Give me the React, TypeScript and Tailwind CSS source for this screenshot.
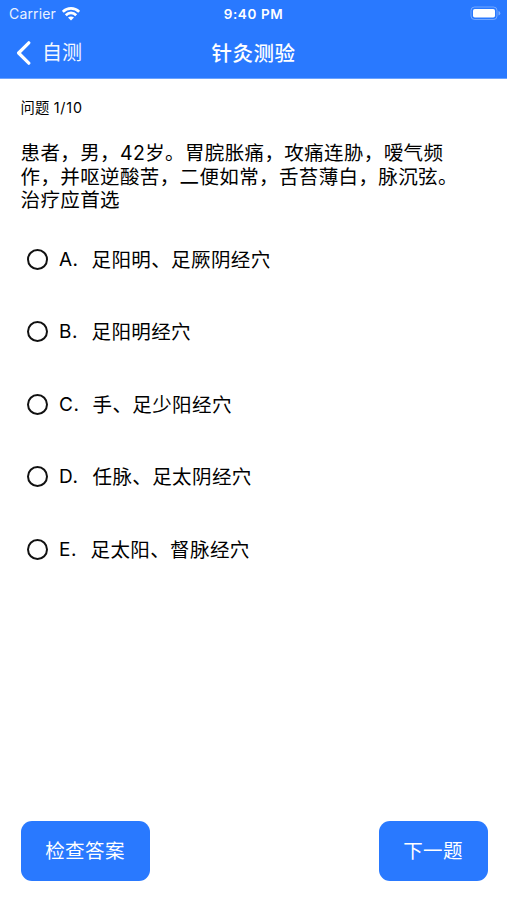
const options = [
  { key: 'A.', text: '足阳明、足厥阴经穴', gap: 'pl-[32.5px]' },
  { key: 'B.', text: '足阳明经穴', gap: 'pl-[32.5px]' },
  { key: 'C.', text: '手、足少阳经穴', gap: 'pl-[33.5px]' },
  { key: 'D.', text: '任脉、足太阴经穴', gap: 'pl-[33.5px]' },
  { key: 'E.', text: '足太阳、督脉经穴', gap: 'pl-[31.5px]' },
];

const questionLines = [
  '患者，男，42岁。胃脘胀痛，攻痛连胁，嗳气频',
  '作，并呕逆酸苦，二便如常，舌苔薄白，脉沉弦。',
  '治疗应首选',
];

function WifiIcon() {
  return (
    <svg className="ml-[6px] h-[14px] w-[18px]" viewBox="0 0 18 14" fill="none" stroke="white" strokeWidth="2.7">
      <path d="M0.8 4.8C5.4 0.2 12.6 0.2 17.2 4.8" />
      <path d="M3.8 8.2C6.8 5.2 11.2 5.2 14.2 8.2" />
      <path d="M9 13.6L6 10.6Q9 8.3 12 10.6Z" fill="white" stroke="none" />
    </svg>
  );
}

function BatteryIcon() {
  return (
    <svg className="h-[15px] w-[31px]" viewBox="0 0 31 15">
      <rect x="1" y="1" width="26" height="12.5" rx="3.5" fill="none" stroke="white" strokeOpacity="0.35" />
      <rect x="3" y="3" width="22" height="8.5" rx="1.8" fill="white" />
      <path d="M28.5 5Q30.3 5.5 30.3 7.2T28.5 9.5Z" fill="white" fillOpacity="0.4" />
    </svg>
  );
}

export default function App() {
  return (
    <div className="flex h-[900px] w-[507px] flex-col overflow-hidden bg-white font-['Inter','Noto_Sans_CJK_SC',sans-serif] text-black">
      <header className="h-[79px] shrink-0 border-b border-[#6ba3ff] bg-[#2979ff] text-white">
        <div className="grid h-[27px] grid-cols-3 items-center">
          <div className="flex h-[27px] items-center pl-[9px]">
            <span className="text-[14px] leading-[27px] tracking-[0.15px] opacity-90">Carrier</span>
            <WifiIcon />
          </div>
          <span className="h-[27px] pt-px text-center text-[13.5px] font-semibold leading-[27px] tracking-[0.6px]">9:40 PM</span>
          <div className="flex h-[27px] items-center justify-end pr-[6px]">
            <BatteryIcon />
          </div>
        </div>
        <div className="grid h-[51px] grid-cols-[1fr_auto_1fr] items-center">
          <button className="flex items-center pl-[16px]">
            <svg className="h-[24px] w-[15px]" viewBox="0 0 15 24" fill="none" stroke="white" strokeWidth="3.2" strokeLinecap="round" strokeLinejoin="round">
              <path d="M12.8 1.8L2.6 12L12.8 22.2" />
            </svg>
            <span className="ml-[11px] pt-px text-[20px] leading-[30px] opacity-95">自测</span>
          </button>
          <h1 className="pt-[2px] text-[20.5px] font-medium leading-[30px] tracking-[0.5px]">针灸测验</h1>
        </div>
      </header>

      <main className="flex grow flex-col">
        <p className="mt-[17px] h-[24px] pl-[20.5px] text-[14.3px] leading-[24px] tracking-[0.2px]">
          问题 <span className="tracking-[0.8px]">1/10</span>
        </p>
        <div className="mt-[22px] h-[71px] pl-[20.5px]">
          {questionLines.map((line) => (
            <p key={line} className="whitespace-nowrap text-[19.5px] leading-[23.5px] tracking-[0.38px]">{line}</p>
          ))}
        </div>
        <ul className="mt-[9.75px]">
          {options.map((option) => (
            <li key={option.key} className="flex h-[72.5px] items-center pl-[27px]">
              <span className="size-[21px] shrink-0 rounded-full border-2 border-[#111]" />
              <span className="-mr-[32px] ml-[11px] w-[32px] shrink-0 pt-px text-[19px] leading-[30px] tracking-[0.5px]">{option.key}</span>
              <span className="pt-px text-[19.5px] leading-[30px] tracking-[0.4px]">
                <span className={option.gap}>{option.text}</span>
              </span>
            </li>
          ))}
        </ul>
      </main>

      <footer className="flex shrink-0 justify-between pb-[19.5px] pl-[20.5px] pr-[19.5px]">
        <button className="h-[60px] w-[129px] rounded-[11px] bg-[#2979ff] pt-[2px] text-[19.5px] tracking-[0.4px] text-white">检查答案</button>
        <button className="h-[60px] w-[109px] rounded-[11px] bg-[#2979ff] pt-[2px] text-[19.5px] tracking-[0.4px] text-white">下一题</button>
      </footer>
    </div>
  );
}
